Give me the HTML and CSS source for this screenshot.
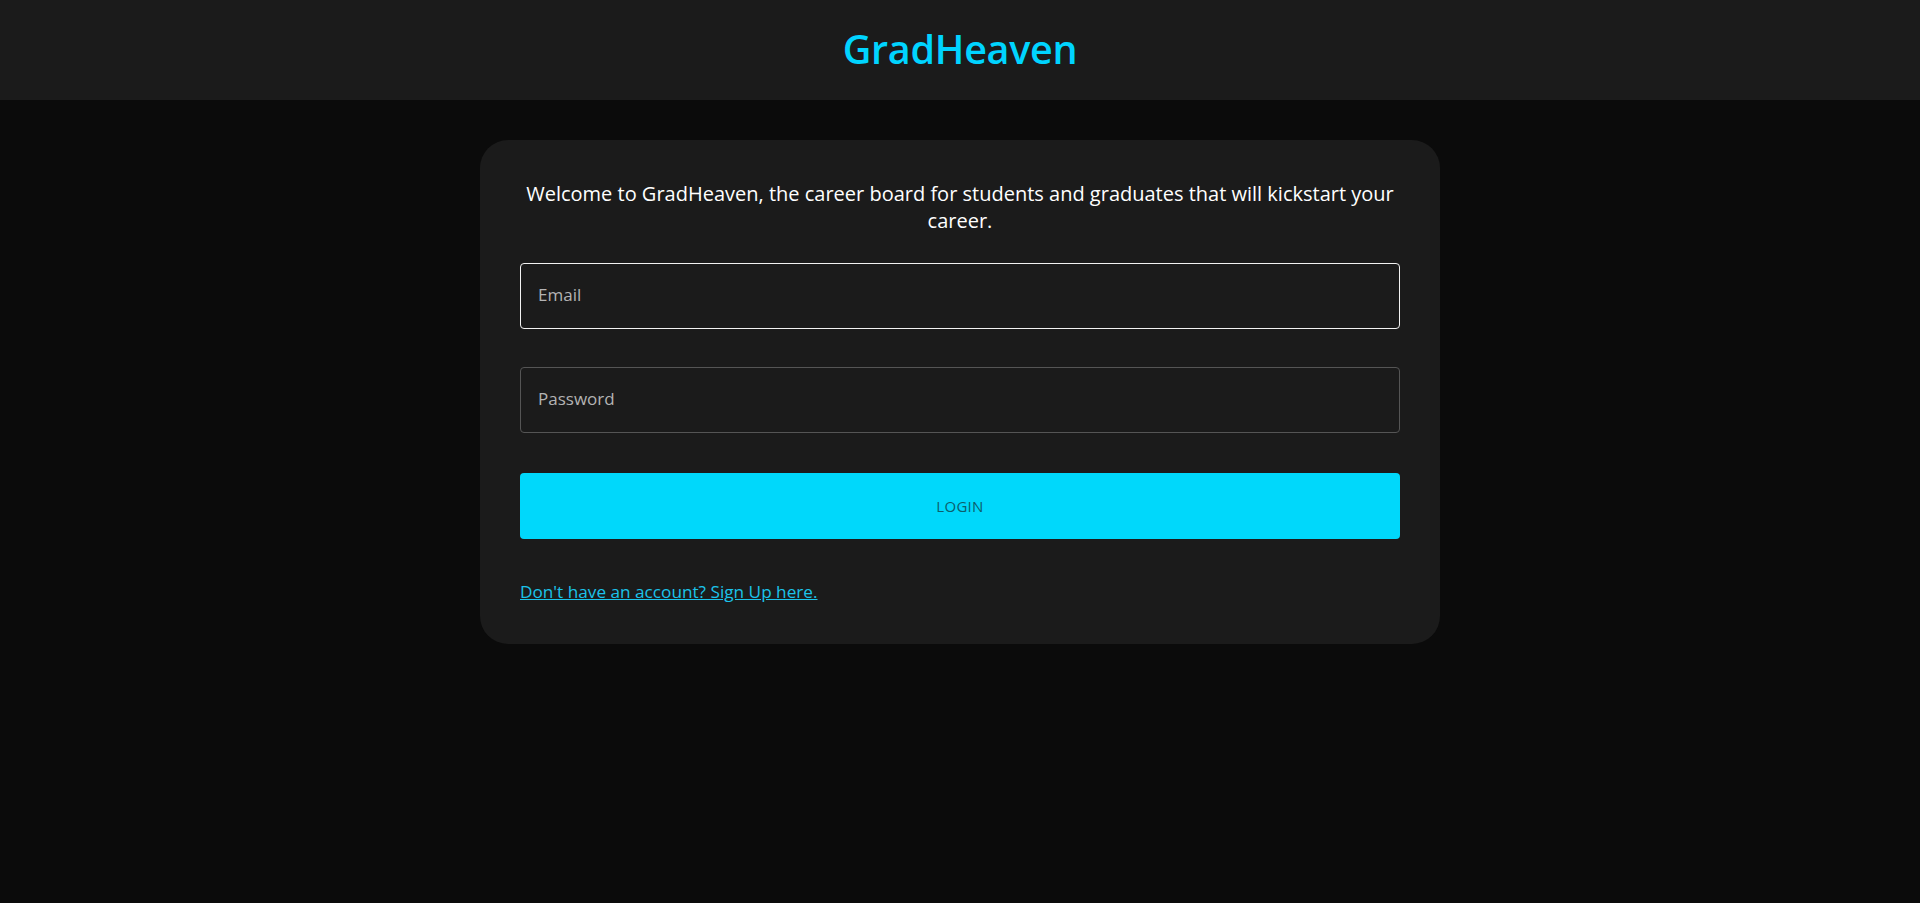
FILE: index.html
```html
<!DOCTYPE html>
<html lang="en">
<head>
<meta charset="utf-8">
<title>GradHeaven</title>
<link rel="stylesheet" href="styles.css">
</head>
<body>
<header class="topbar">
  <h1 class="brand">GradHeaven</h1>
</header>
<main class="page">
  <section class="card">
    <p class="intro">Welcome to GradHeaven, the career board for students and graduates that will kickstart your career.</p>
    <form class="form">
      <input class="field field-active" type="email" placeholder="Email">
      <input class="field" type="password" placeholder="Password">
      <button class="login" type="button">LOGIN</button>
    </form>
    <a class="signup" href="#">Don't have an account? Sign Up here.</a>
  </section>
</main>
</body>
</html>
```
FILE: styles.css
```css
* { box-sizing: border-box; }
html, body {
  margin: 0;
  height: 100%;
}
body {
  background: #0b0b0b;
  font-family: "Open Sans", "Noto Sans", sans-serif;
  color: #fff;
}
.topbar {
  height: 100px;
  background: #1b1b1b;
  display: flex;
  align-items: center;
  justify-content: center;
}
.brand {
  margin: 0;
  font-size: 39.5px;
  font-weight: 600;
  color: #00d4ff;
  line-height: 1;
  letter-spacing: -0.3px;
}
.page {
  display: flex;
  justify-content: center;
  padding-top: 40px;
}
.card {
  width: 960px;
  background: #1b1b1b;
  border-radius: 28px;
  padding: 40px 40px 40px;
  display: flex;
  flex-direction: column;
}
.intro {
  margin: 0 0 29px;
  font-size: 20px;
  line-height: 27px;
  text-align: center;
  color: #fff;
}
.form {
  display: flex;
  flex-direction: column;
  gap: 38px;
}
.field {
  height: 66px;
  width: 100%;
  background: #1b1b1b;
  border: 1px solid #555;
  border-radius: 4px;
  padding: 0 17px 3px;
  font-family: inherit;
  font-size: 17px;
  color: #fff;
  outline: none;
}
.field::placeholder {
  color: #b3b3b3;
  opacity: 1;
}
.field-active {
  border-color: #f2f2f2;
}
.login {
  margin-top: 2px;
  height: 66px;
  width: 100%;
  border: none;
  border-radius: 4px;
  background: #00d8fb;
  color: #0d5e6b;
  font-family: inherit;
  font-size: 15px;
  letter-spacing: 0.3px;
  cursor: pointer;
}
.signup {
  margin-top: 41px;
  align-self: flex-start;
  font-size: 17.2px;
  line-height: 24px;
  color: #1bc3ea;
  text-decoration: underline;
}
```
